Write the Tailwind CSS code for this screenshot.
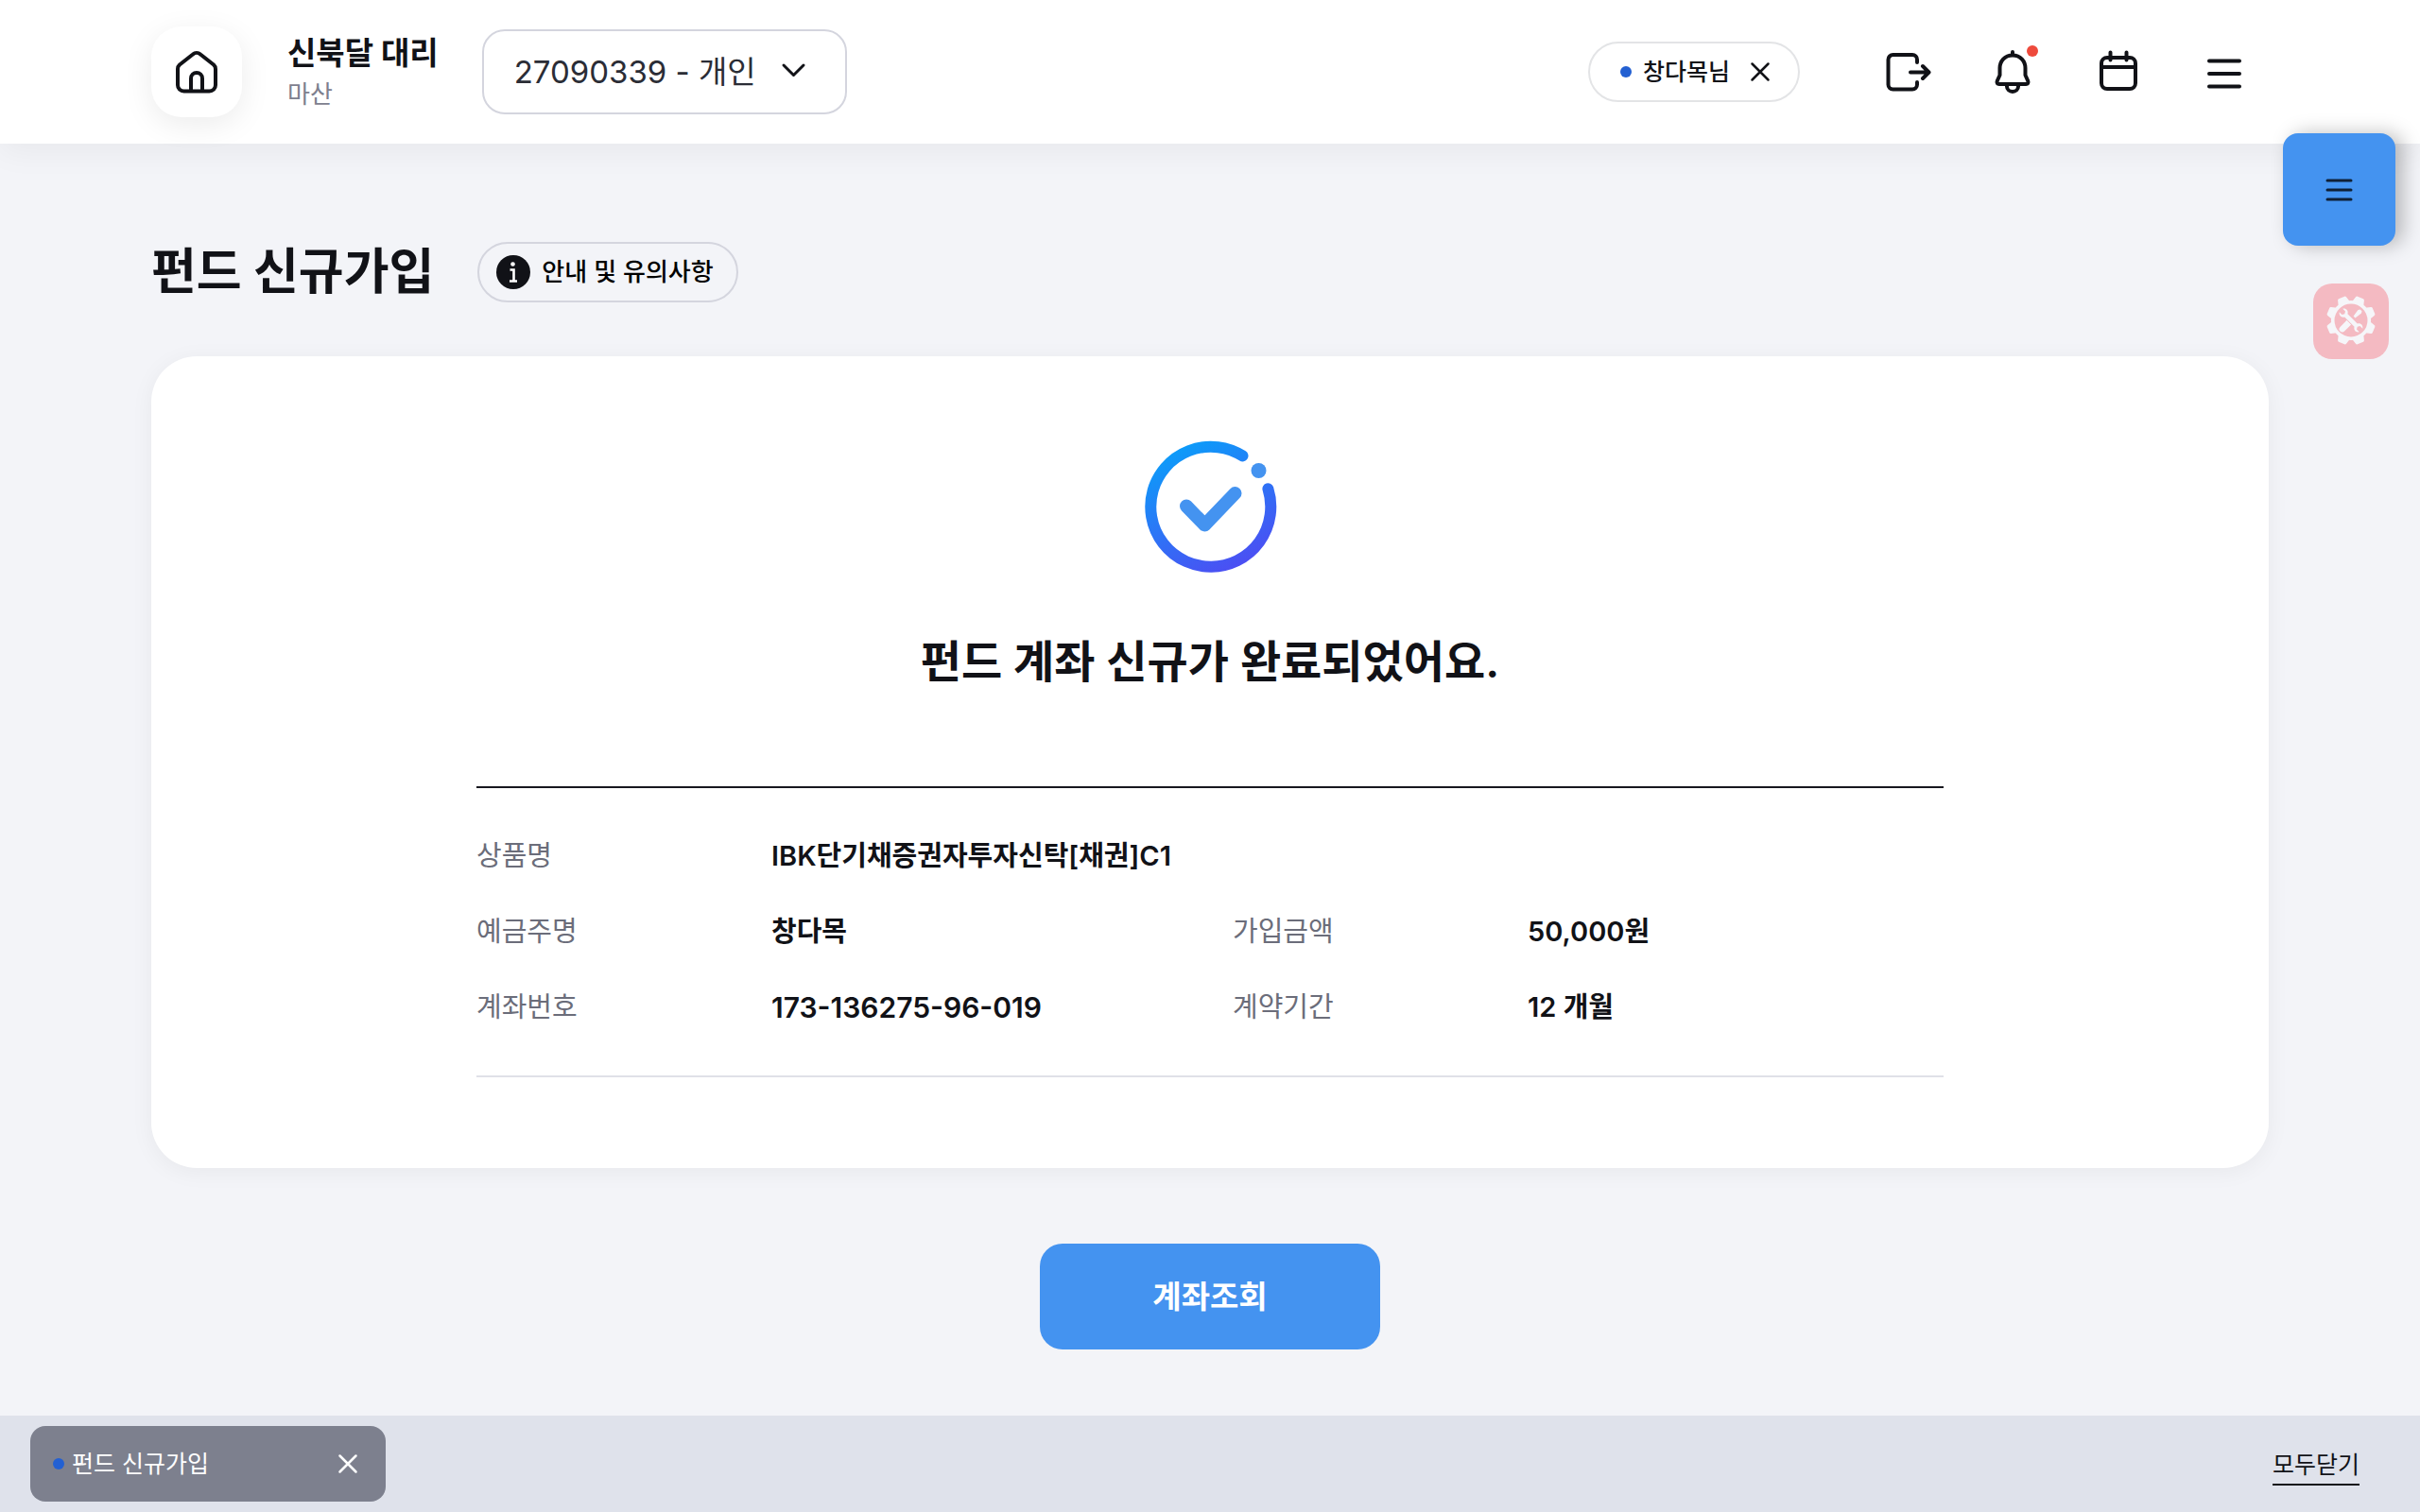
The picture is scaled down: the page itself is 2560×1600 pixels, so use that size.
<!DOCTYPE html>
<html lang="ko">
<head>
<meta charset="utf-8">
<meta name="viewport" content="width=device-width, initial-scale=1">
<title>펀드 신규가입</title>
<script src="https://cdn.jsdelivr.net/npm/@tailwindcss/browser@4"></script>
</head>
<body class="relative flex min-h-screen flex-col bg-[#f3f4f8] font-['Inter','Noto_Sans_CJK_KR',sans-serif] text-[#111217]">

<header class="flex h-38 items-center justify-between bg-white px-40 shadow-[0_8px_32px_rgba(0,0,0,0.05)]">
  <div class="flex items-center">
    <button type="button" aria-label="홈" class="flex size-24 items-center justify-center rounded-[32px] bg-white shadow-[0_8px_32px_rgba(0,0,0,0.08)]">
      <svg class="size-12" viewBox="0 0 48 48" fill="none" stroke="currentColor" stroke-width="4" stroke-linejoin="round">
        <path d="M4 21a6 6 0 0 1 2-4.500L20 5.500a6 6 0 0 1 8 0L42 16.500A6 6 0 0 1 44 21V38a6.500 6.500 0 0 1-6.500 6.500H10.500A6.500 6.500 0 0 1 4 38Z"/>
        <path d="M18 44V31a6 6 0 0 1 12 0v13"/>
      </svg>
    </button>
    <div class="ml-12 flex flex-col">
      <strong class="text-[33px] leading-[48px] font-bold">신북달 대리</strong>
      <span class="text-[26px] leading-10 text-[#7d808e]">마산</span>
    </div>
    <div class="relative ml-[46px] text-[#2b2d36]">
      <select aria-label="고객 번호" class="h-[90px] w-[386px] appearance-none rounded-3xl border-2 border-[#d4d5de] bg-white pl-8 text-[33px] leading-[48px]">
        <option>27090339 - 개인</option>
      </select>
      <svg class="pointer-events-none absolute top-7 right-10 size-8 text-[#111217]" viewBox="0 0 32 32" fill="none" stroke="currentColor" stroke-width="3" stroke-linecap="round" stroke-linejoin="round"><path d="m5 10 10.500 10.500L26 10"/></svg>
    </div>
  </div>

  <div class="flex items-center">
    <div class="mr-16 flex h-16 w-56 items-center rounded-full border-2 border-[#e3e4e6] pl-8">
      <span class="size-3 rounded-full bg-[#2360d2]"></span>
      <span class="ml-3 text-[25px] leading-9 font-medium whitespace-nowrap">창다목님</span>
      <button type="button" aria-label="고객 닫기" class="ml-4 flex size-8 items-center justify-center">
        <svg class="size-8" viewBox="0 0 32 32" stroke="currentColor" stroke-width="2.500" stroke-linecap="round"><path d="m7.500 7.500 17 17M24.500 7.500l-17 17"/></svg>
      </button>
    </div>
    <nav aria-label="빠른 메뉴" class="flex gap-4">
      <button type="button" aria-label="로그아웃" class="flex size-24 items-center justify-center">
        <svg class="size-12 overflow-visible" viewBox="0 0 48 48" fill="none" stroke="currentColor" stroke-width="4" stroke-linecap="round" stroke-linejoin="round"><path d="M36 14v-3a5 5 0 0 0-5-5H10.500a5 5 0 0 0-5 5v26.500a5 5 0 0 0 5 5H31a5 5 0 0 0 5-5V35M29 24.500h19M42 18l6.500 6.500L42 31"/></svg>
      </button>
      <button type="button" aria-label="알림" class="relative flex size-24 items-center justify-center">
        <svg class="size-12 overflow-visible" viewBox="-1 0 48 48" fill="none" stroke="currentColor" stroke-width="4" stroke-linecap="round" stroke-linejoin="round"><path d="M24 6.500C15.500 6.500 10.500 13 10.500 20v7.500L7.800 33.500c-.9 2.500.2 3.500 2 3.500h28.400c1.800 0 2.900-1 2-3.500l-2.700-6V20C37.500 13 32.500 6.500 24 6.500ZM24 3v3M18 38v1.500a6 5.500 0 0 0 12 0V38"/></svg>
        <span class="absolute top-5 right-5 size-3 rounded-full bg-[#ee4a3c]"></span>
      </button>
      <button type="button" aria-label="일정" class="flex size-24 items-center justify-center">
        <svg class="size-12 overflow-visible" viewBox="-1 0 48 48" fill="none" stroke="currentColor" stroke-width="4" stroke-linecap="round"><rect x="6" y="9" width="36" height="33" rx="6"/><path d="M6 19h36M15.500 3.500v8M32.500 3.500v8"/></svg>
      </button>
      <button type="button" aria-label="전체 메뉴" class="flex size-24 items-center justify-center">
        <svg class="size-12" viewBox="-1 0 48 48" stroke="currentColor" stroke-width="4" stroke-linecap="round"><path d="M8 12.500h32M8 26h32M8 39.500h32"/></svg>
      </button>
    </nav>
  </div>
</header>

<main class="flex flex-1 flex-col px-40 pt-[104px] pb-16">
  <div class="flex h-16 items-center gap-[46px]">
    <h1 class="text-[52px] leading-16 font-bold whitespace-nowrap">펀드 신규가입</h1>
    <button type="button" class="flex h-16 items-center rounded-full border-2 border-[#d4d5de] pr-6 pl-[18px]">
      <svg class="size-9" viewBox="0 0 36 36"><circle cx="18" cy="18" r="18" fill="#111217"/><circle cx="17.500" cy="9.500" r="2.300" fill="#fff"/><path d="M14.500 15.500h4v12M14 27.500h8" fill="none" stroke="#fff" stroke-width="2.600"/></svg>
      <span class="ml-3 text-[26px] leading-9 font-medium whitespace-nowrap text-black">안내 및 유의사항</span>
    </button>
  </div>

  <section class="mt-[57px] flex flex-col items-center rounded-[48px] bg-white px-[344px] pt-[87px] pb-24 shadow-[0_4px_24px_rgba(0,0,0,0.05)]">
    <svg class="size-36" viewBox="0 0 144 144" fill="none" stroke-linecap="round" aria-hidden="true">
      <defs><linearGradient id="ring" x1="40" y1="10" x2="104" y2="134" gradientUnits="userSpaceOnUse"><stop offset="0" stop-color="#0d9bf9"/><stop offset="1" stop-color="#4b4ff3"/></linearGradient></defs>
      <path d="M106.500 18.400A63.500 63.500 0 1 0 133.400 53.300" stroke="url(#ring)" stroke-width="12"/>
      <circle cx="123.500" cy="34" r="8" fill="#4493f0"/>
      <path d="m47 71.500 19.500 20L98.500 58" stroke="#4493f0" stroke-width="14" stroke-linejoin="round"/>
    </svg>
    <h2 class="mt-[60px] text-[47px] leading-16 font-semibold whitespace-nowrap">펀드 계좌 신규가 완료되었어요.</h2>
    <div class="mt-[100px] w-full border-t-2 border-t-[#17171f] border-b-2 border-b-[#e0e1e8] py-8">
      <table class="w-full table-fixed text-left text-[29px] leading-10">
        <colgroup><col class="w-[312px]"><col class="w-[488px]"><col class="w-[312px]"><col></colgroup>
        <tbody>
          <tr class="h-20"><th scope="row" class="font-normal text-[#6b6d7a]">상품명</th><td colspan="3" class="font-semibold">IBK단기채증권자투자신탁[채권]C1</td></tr>
          <tr class="h-20"><th scope="row" class="font-normal text-[#6b6d7a]">예금주명</th><td class="font-semibold">창다목</td><th scope="row" class="font-normal text-[#6b6d7a]">가입금액</th><td class="font-semibold">50,000원</td></tr>
          <tr class="h-20"><th scope="row" class="font-normal text-[#6b6d7a]">계좌번호</th><td class="text-[30px] font-semibold">173-136275-96-019</td><th scope="row" class="font-normal text-[#6b6d7a]">계약기간</th><td class="font-semibold">12 개월</td></tr>
        </tbody>
      </table>
    </div>
  </section>

  <button type="button" class="mt-20 h-28 w-[360px] self-center rounded-3xl bg-[#4493f0] text-[33px] leading-[48px] font-semibold text-white">계좌조회</button>
</main>

<footer class="flex h-[102px] items-center justify-between bg-[#dfe2eb] pr-16 pl-8">
  <div class="flex h-20 w-[376px] items-center rounded-2xl bg-[#7d808e] pr-6 pl-6 text-white">
    <span class="size-3 rounded-full bg-[#2360d2]"></span>
    <a href="#" class="ml-2 flex-1 text-[25px] leading-9 whitespace-nowrap">펀드 신규가입</a>
    <button type="button" aria-label="탭 닫기" class="size-8"><svg class="size-8" viewBox="0 0 32 32" stroke="currentColor" stroke-width="2.500" stroke-linecap="round"><path d="m7.500 7.500 17 17M24.500 7.500l-17 17"/></svg></button>
  </div>
  <button type="button" class="border-b-2 border-[#111217] pt-1 text-[25px] leading-10">모두닫기</button>
</footer>

<!-- 화면 위에 떠 있는 바로가기 버튼 -->
<button type="button" aria-label="퀵 메뉴" class="absolute top-[141px] right-[26px] flex size-[119px] items-center justify-center rounded-2xl bg-[#4493f0] text-[#0f2036] shadow-[8px_0_20px_rgba(0,0,0,0.25)]">
  <svg class="size-8" viewBox="0 0 32 32" stroke="currentColor" stroke-width="3" stroke-linecap="round"><path d="M3 6h25M3 16h25M3 26h25"/></svg>
</button>
<button type="button" aria-label="도구 설정" class="absolute top-[300px] right-[33px] size-20 rounded-[20px] bg-[#f4bac2]">
  <svg class="size-20" viewBox="0 0 80 80" aria-hidden="true">
    <g transform="translate(40 39)">
      <g fill="#f6f6f9">
        <path id="tooth" d="M-6.500-19-4.800-24.700Q-4.500-26-3.300-26H3.300Q4.500-26 4.800-24.700L6.500-19Z" transform="rotate(22.500)"/>
        <use href="#tooth" transform="rotate(45)"/><use href="#tooth" transform="rotate(90)"/><use href="#tooth" transform="rotate(135)"/><use href="#tooth" transform="rotate(180)"/><use href="#tooth" transform="rotate(225)"/><use href="#tooth" transform="rotate(270)"/><use href="#tooth" transform="rotate(315)"/>
      </g>
      <circle r="19.300" fill="none" stroke="#f6f6f9" stroke-width="3.600"/>
      <g transform="rotate(45)" fill="#f6f6f9">
        <path d="M-1.300-15h2.600l1.200 2-1.200 8h-2.600l-1.200-8Z"/>
        <path d="M-3.200 3h6.400v10a3.200 3.200 0 0 1-6.400 0Z"/>
      </g>
      <g transform="rotate(-45)">
        <path d="M-2.300-7.300C-5.500-9-5.500-13-2.500-14.800V-11L0-9.600 2.500-11v-3.800C5.500-13 5.500-9 2.300-7.300V7.300C5.500 9 5.500 13 2.500 14.800V11L0 9.600-2.500 11v3.800C-5.500 13-5.500 9-2.300 7.300Z" fill="#f6f6f9" stroke="#f4bac2" stroke-width="1" paint-order="stroke"/>
      </g>
    </g>
  </svg>
</button>
</body>
</html>
